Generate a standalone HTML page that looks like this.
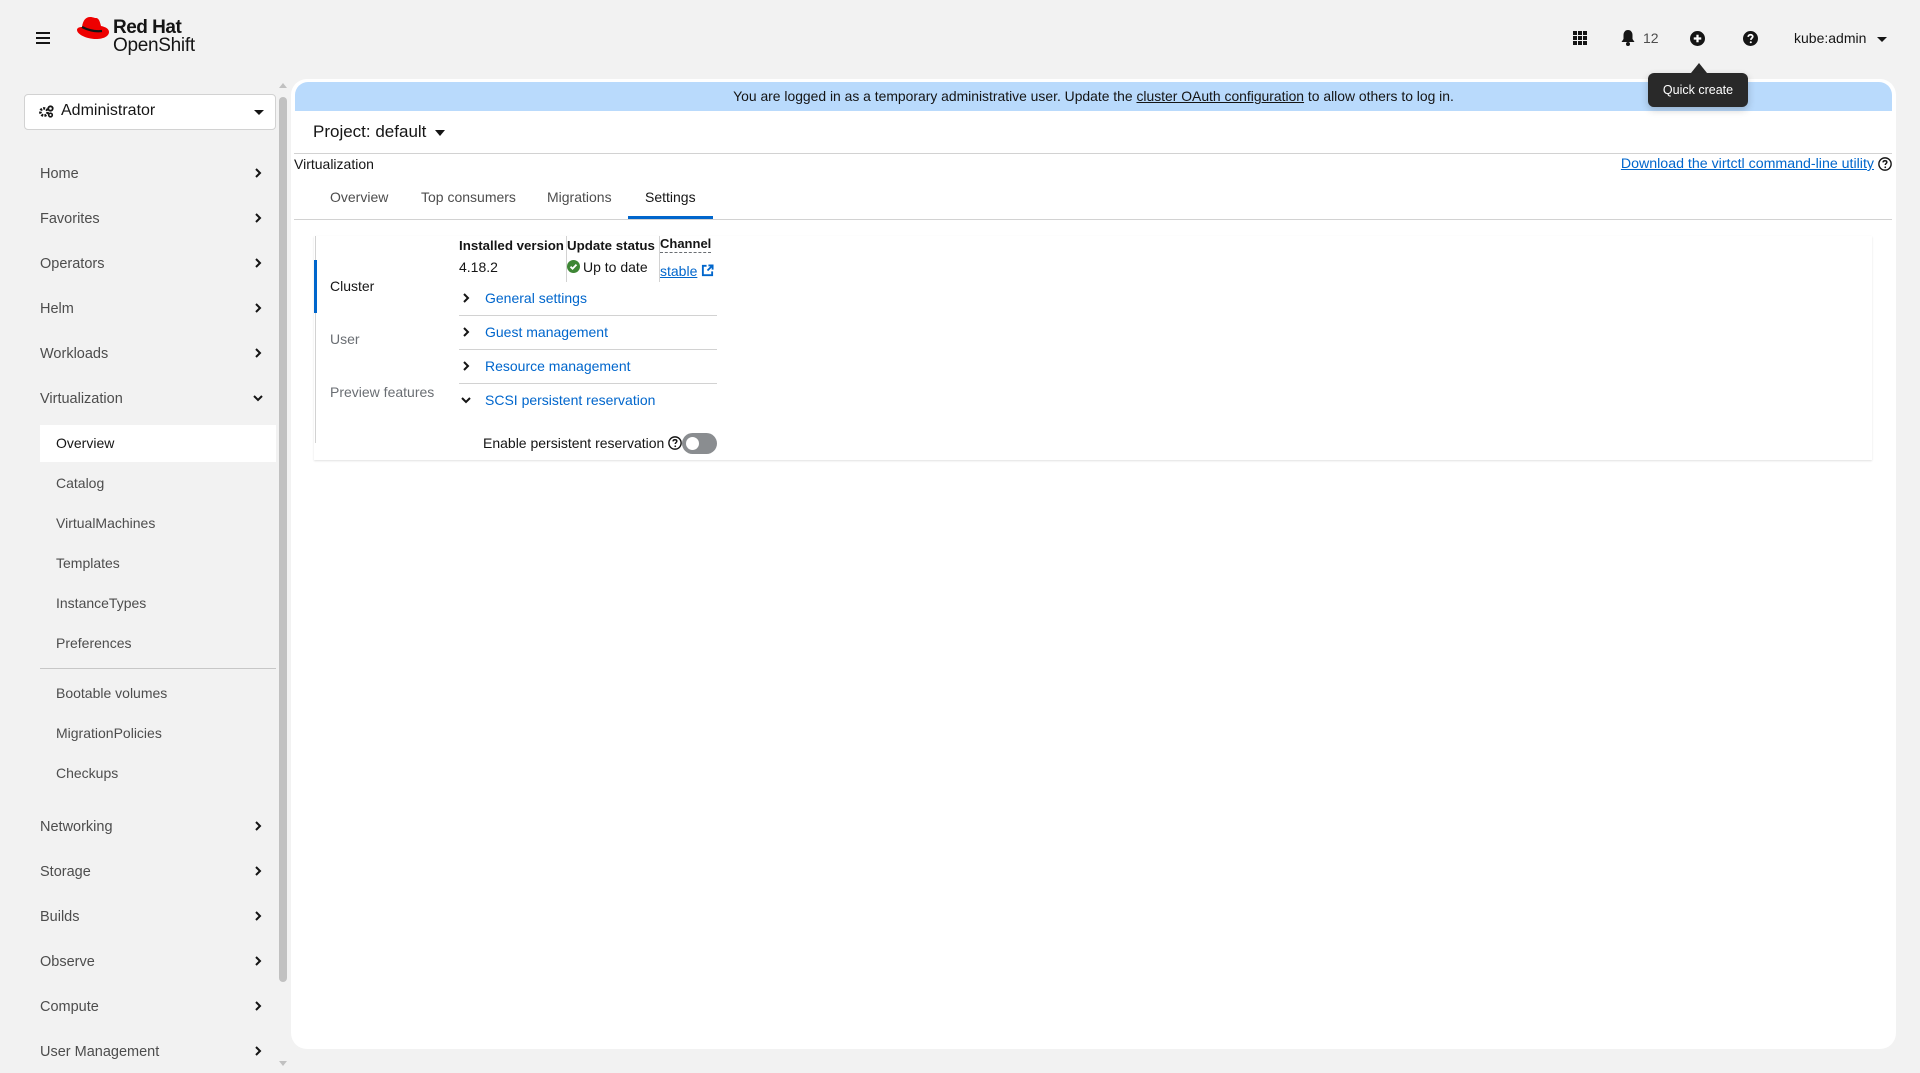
<!DOCTYPE html>
<html><head><meta charset="utf-8"><style>
*{box-sizing:border-box;margin:0;padding:0}
body{width:1920px;height:1073px;background:#f2f2f2;font-family:"Liberation Sans",sans-serif;color:#151515;position:relative;overflow:hidden;font-size:14px}
.a{position:absolute;white-space:nowrap}
.nav{left:40px;font-size:14.5px;color:#4d4d4d;transform:translateY(-50%)}
.sub{left:56px;font-size:14px;color:#4d4d4d;transform:translateY(-50%)}
.chev{left:254px;transform:translateY(-50%)}
.link{color:#0066cc}
</style></head><body>
<div class="a" style="left:36px;top:32px;width:14px;height:2px;background:#151515;box-shadow:0 5px 0 #151515,0 10px 0 #151515"></div>
<svg class="a" style="left:76px;top:15px" width="34" height="26" viewBox="0 0 34 26"><path d="M6 12 C7 5 10 2 14 2 C17 2 18 3 20 3 C23 3 24 7 25 11 C30 12 33 14 33 17 C33 21 28 24 20 24 C10 24 1 19 1 15 C1 13 3 12 6 12Z" fill="#e00"/><path d="M6 12 C10 14 18 17 26 16" stroke="#151515" stroke-width="2.2" fill="none"/></svg>
<div class="a" style="left:113px;top:17px;font-size:19px;font-weight:bold;letter-spacing:-0.5px">Red Hat</div>
<div class="a" style="left:113px;top:35px;font-size:19px;letter-spacing:-0.3px">OpenShift</div>

<svg class="a" style="left:1573px;top:31px" width="14" height="14" viewBox="0 0 14 14" fill="#151515"><rect x="0" y="0" width="4" height="4"/><rect x="5" y="0" width="4" height="4"/><rect x="10" y="0" width="4" height="4"/><rect x="0" y="5" width="4" height="4"/><rect x="5" y="5" width="4" height="4"/><rect x="10" y="5" width="4" height="4"/><rect x="0" y="10" width="4" height="4"/><rect x="5" y="10" width="4" height="4"/><rect x="10" y="10" width="4" height="4"/></svg>
<svg class="a" style="left:1621px;top:30px" width="14" height="16" viewBox="0 0 14 16" fill="#151515"><path d="M7 0C4 0 2.5 2.5 2.5 5V9L0.5 12H13.5L11.5 9V5C11.5 2.5 10 0 7 0Z"/><circle cx="7" cy="14" r="2"/></svg>
<div class="a" style="left:1643px;top:30px;font-size:14px;color:#4d4d4d">12</div>
<svg class="a" style="left:1690px;top:31px" width="15" height="15" viewBox="0 0 16 16"><circle cx="8" cy="8" r="8" fill="#151515"/><path d="M8 4V12M4 8H12" stroke="#fff" stroke-width="2.4"/></svg>
<svg class="a" style="left:1743px;top:31px" width="15" height="15" viewBox="0 0 16 16"><circle cx="8" cy="8" r="8" fill="#151515"/><path d="M5.6 6.2C5.6 4.8 6.7 4 8 4C9.4 4 10.4 4.8 10.4 6C10.4 7.5 8.4 7.6 8.4 9.4" stroke="#fff" stroke-width="1.9" fill="none"/><circle cx="8.3" cy="12" r="1.1" fill="#fff"/></svg>
<div class="a" style="left:1794px;top:30px;font-size:14px;color:#151515">kube:admin</div>
<div class="a" style="left:1877px;top:37px;border-left:5px solid transparent;border-right:5px solid transparent;border-top:5px solid #151515"></div>

<div class="a" style="left:24px;top:94px;width:252px;height:36px;background:#fff;border:1px solid #d2d2d2;border-radius:4px"></div>
<svg class="a" style="left:39px;top:105px" width="15" height="13" viewBox="0 0 15 13" fill="#151515"><circle cx="5" cy="7" r="3.6" fill="none" stroke="#151515" stroke-width="2.6" stroke-dasharray="2 1.2"/><circle cx="11.5" cy="3.5" r="2.2" fill="none" stroke="#151515" stroke-width="1.8"/><circle cx="11.5" cy="10" r="1.8" fill="none" stroke="#151515" stroke-width="1.6"/></svg>
<div class="a" style="left:61px;top:102px;font-size:16px">Administrator</div>
<div class="a" style="left:254px;top:110px;border-left:5px solid transparent;border-right:5px solid transparent;border-top:5px solid #151515"></div>

<div class="a nav" style="top:174px">Home</div>
<div class="a nav" style="top:219px">Favorites</div>
<div class="a nav" style="top:264px">Operators</div>
<div class="a nav" style="top:309px">Helm</div>
<div class="a nav" style="top:354px">Workloads</div>
<div class="a nav" style="top:399px">Virtualization</div>
<div class="a" style="left:40px;top:425px;width:236px;height:37px;background:#fff"></div>
<div class="a sub" style="top:443px;color:#151515">Overview</div>
<div class="a sub" style="top:483px">Catalog</div>
<div class="a sub" style="top:523px">VirtualMachines</div>
<div class="a sub" style="top:563px">Templates</div>
<div class="a sub" style="top:603px">InstanceTypes</div>
<div class="a sub" style="top:643px">Preferences</div>
<div class="a" style="left:40px;top:668px;width:236px;height:1px;background:#c7c7c7"></div>
<div class="a sub" style="top:693px">Bootable volumes</div>
<div class="a sub" style="top:733px">MigrationPolicies</div>
<div class="a sub" style="top:773px">Checkups</div>
<div class="a nav" style="top:827px">Networking</div>
<div class="a nav" style="top:872px">Storage</div>
<div class="a nav" style="top:917px">Builds</div>
<div class="a nav" style="top:962px">Observe</div>
<div class="a nav" style="top:1007px">Compute</div>
<div class="a nav" style="top:1052px">User Management</div>
<svg width="0" height="0" style="position:absolute"><defs><path id="cr" d="M2 1L6 5L2 9" stroke="#151515" stroke-width="2" fill="none"/></defs></svg>
<svg class="a chev" style="top:173px" width="8" height="10"><use href="#cr"/></svg>
<svg class="a chev" style="top:218px" width="8" height="10"><use href="#cr"/></svg>
<svg class="a chev" style="top:263px" width="8" height="10"><use href="#cr"/></svg>
<svg class="a chev" style="top:308px" width="8" height="10"><use href="#cr"/></svg>
<svg class="a chev" style="top:353px" width="8" height="10"><use href="#cr"/></svg>
<svg class="a" style="left:253px;top:394px" width="10" height="8"><path d="M1 2L5 6L9 2" stroke="#151515" stroke-width="2" fill="none"/></svg>
<svg class="a chev" style="top:826px" width="8" height="10"><use href="#cr"/></svg>
<svg class="a chev" style="top:871px" width="8" height="10"><use href="#cr"/></svg>
<svg class="a chev" style="top:916px" width="8" height="10"><use href="#cr"/></svg>
<svg class="a chev" style="top:961px" width="8" height="10"><use href="#cr"/></svg>
<svg class="a chev" style="top:1006px" width="8" height="10"><use href="#cr"/></svg>
<svg class="a chev" style="top:1051px" width="8" height="10"><use href="#cr"/></svg>
<div class="a" style="left:279px;top:97px;width:8px;height:885px;background:#c1c1c1;border-radius:4px"></div>
<div class="a" style="left:279px;top:83px;border-left:4px solid transparent;border-right:4px solid transparent;border-bottom:5px solid #c1c1c1"></div>
<div class="a" style="left:279px;top:1061px;border-left:4px solid transparent;border-right:4px solid transparent;border-top:5px solid #c1c1c1"></div>

<div class="a" style="left:291px;top:79px;width:1605px;height:970px;background:#fff;border-radius:16px"></div>
<div class="a" style="left:295px;top:82px;width:1597px;height:29px;background:#b9dafc;border-radius:13px 13px 0 0"></div>
<div class="a" style="left:295px;top:88px;width:1597px;text-align:center;font-size:13.9px">You are logged in as a temporary administrative user. Update the <span style="text-decoration:underline">cluster OAuth configuration</span> to allow others to log in.</div>
<div class="a" style="left:313px;top:122px;font-size:17px">Project: default</div>
<div class="a" style="left:435px;top:130px;border-left:5px solid transparent;border-right:5px solid transparent;border-top:6px solid #151515"></div>
<div class="a" style="left:294px;top:153px;width:1598px;height:1px;background:#d2d2d2"></div>
<div class="a" style="left:294px;top:156px;font-size:14px">Virtualization</div>
<div class="a link" style="right:46px;top:156px;font-size:14.2px;text-decoration:underline">Download the virtctl command-line utility</div>
<svg class="a" style="left:1878px;top:157px" width="14" height="14" viewBox="0 0 16 16"><circle cx="8" cy="8" r="7" fill="none" stroke="#151515" stroke-width="1.6"/><path d="M5.8 6.2C5.8 5 6.8 4.3 8 4.3C9.2 4.3 10.1 5 10.1 6C10.1 7.4 8.3 7.5 8.3 9.2" stroke="#151515" stroke-width="1.7" fill="none"/><circle cx="8.3" cy="11.7" r="1" fill="#151515"/></svg>
<div class="a" style="left:330px;top:189px;font-size:14px;color:#4d4d4d">Overview</div>
<div class="a" style="left:421px;top:189px;font-size:14px;color:#4d4d4d">Top consumers</div>
<div class="a" style="left:547px;top:189px;font-size:14px;color:#4d4d4d">Migrations</div>
<div class="a" style="left:645px;top:189px;font-size:14px;color:#151515">Settings</div>
<div class="a" style="left:294px;top:219px;width:1598px;height:1px;background:#d2d2d2"></div>
<div class="a" style="left:628px;top:216px;width:85px;height:3px;background:#0066cc"></div>

<div class="a" style="left:314px;top:236px;width:1558px;height:224px;background:#fff;box-shadow:0 1px 2px rgba(0,0,0,.12)"></div>
<div class="a" style="left:315px;top:236px;width:1px;height:207px;background:#d2d2d2"></div>
<div class="a" style="left:314px;top:260px;width:3px;height:53px;background:#0066cc"></div>
<div class="a" style="left:330px;top:278px;font-size:14px">Cluster</div>
<div class="a" style="left:330px;top:331px;font-size:14px;color:#6a6e73">User</div>
<div class="a" style="left:330px;top:384px;font-size:14px;color:#6a6e73">Preview features</div>

<div class="a" style="left:459px;top:238px;font-size:13.3px;font-weight:bold">Installed version</div>
<div class="a" style="left:459px;top:259px;font-size:14px">4.18.2</div>
<div class="a" style="left:566px;top:236px;width:1px;height:46px;background:#d2d2d2"></div>
<div class="a" style="left:567px;top:238px;font-size:13.3px;font-weight:bold">Update status</div>
<svg class="a" style="left:567px;top:260px" width="13" height="13" viewBox="0 0 14 14"><circle cx="7" cy="7" r="7" fill="#3e8635"/><path d="M3.8 7.2L6 9.4L10.2 5" stroke="#fff" stroke-width="2" fill="none"/></svg>
<div class="a" style="left:583px;top:259px;font-size:14px">Up to date</div>
<div class="a" style="left:659px;top:236px;width:1px;height:46px;background:#d2d2d2"></div>
<div class="a" style="left:660px;top:236px;font-size:13px;font-weight:bold;border-bottom:1px dashed #6a6e73;padding-bottom:1px">Channel</div>
<div class="a link" style="left:660px;top:263px;font-size:14px;text-decoration:underline">stable</div>
<svg class="a" style="left:701px;top:264px" width="13" height="13" viewBox="0 0 14 14"><path d="M6 2H2V12H12V8" stroke="#0066cc" stroke-width="2" fill="none"/><path d="M7 7L12 2M8 1.5H12.5V6" stroke="#0066cc" stroke-width="2" fill="none"/></svg>

<svg class="a" style="left:462px;top:293px" width="8" height="10"><path d="M2 1L6 5L2 9" stroke="#151515" stroke-width="2" fill="none"/></svg>
<div class="a link" style="left:485px;top:290px;font-size:14px">General settings</div>
<div class="a" style="left:459px;top:315px;width:258px;height:1px;background:#d2d2d2"></div>
<svg class="a" style="left:462px;top:327px" width="8" height="10"><path d="M2 1L6 5L2 9" stroke="#151515" stroke-width="2" fill="none"/></svg>
<div class="a link" style="left:485px;top:324px;font-size:14px">Guest management</div>
<div class="a" style="left:459px;top:349px;width:258px;height:1px;background:#d2d2d2"></div>
<svg class="a" style="left:462px;top:361px" width="8" height="10"><path d="M2 1L6 5L2 9" stroke="#151515" stroke-width="2" fill="none"/></svg>
<div class="a link" style="left:485px;top:358px;font-size:14px">Resource management</div>
<div class="a" style="left:459px;top:383px;width:258px;height:1px;background:#d2d2d2"></div>
<svg class="a" style="left:461px;top:396px" width="10" height="8"><path d="M1 2L5 6L9 2" stroke="#151515" stroke-width="2" fill="none"/></svg>
<div class="a link" style="left:485px;top:392px;font-size:14px">SCSI persistent reservation</div>
<div class="a" style="left:483px;top:435px;font-size:14px">Enable persistent reservation</div>
<svg class="a" style="left:668px;top:436px" width="14" height="14" viewBox="0 0 16 16"><circle cx="8" cy="8" r="7" fill="none" stroke="#151515" stroke-width="1.6"/><path d="M5.8 6.2C5.8 5 6.8 4.3 8 4.3C9.2 4.3 10.1 5 10.1 6C10.1 7.4 8.3 7.5 8.3 9.2" stroke="#151515" stroke-width="1.7" fill="none"/><circle cx="8.3" cy="11.7" r="1" fill="#151515"/></svg>
<div class="a" style="left:682px;top:433px;width:35px;height:21px;background:#8a8d90;border-radius:11px"></div>
<div class="a" style="left:686px;top:437px;width:13px;height:13px;background:#fff;border-radius:50%"></div>

<div class="a" style="left:1691px;top:63px;border-left:8px solid transparent;border-right:8px solid transparent;border-bottom:10px solid #292929"></div>
<div class="a" style="left:1648px;top:73px;width:100px;height:34px;background:#292929;border-radius:6px;color:#fff;font-size:12.5px;text-align:center;line-height:34px;box-shadow:0 3px 8px rgba(0,0,0,.2)">Quick create</div>
</body></html>
